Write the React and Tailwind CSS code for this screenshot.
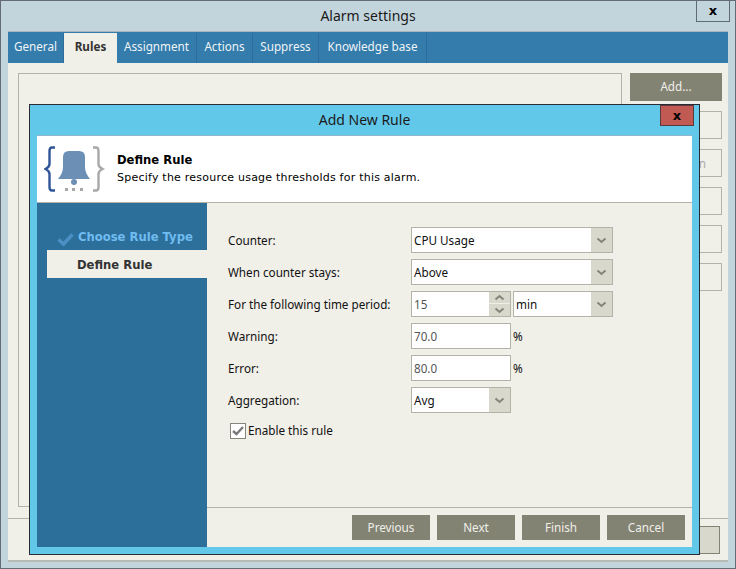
import React from "react";

const tabs = [
  { label: "General", w: "w-[56px]" },
  { label: "Rules", w: "w-[53px]", active: true },
  { label: "Assignment", w: "w-[80px]" },
  { label: "Actions", w: "w-[56px]" },
  { label: "Suppress", w: "w-[66px]" },
  { label: "Knowledge base", w: "w-[108px]" },
];

const ui = "font-['Noto_Sans','Liberation_Sans',sans-serif] text-[11.7px]";
const wide = "font-['DejaVu_Sans',sans-serif]";

function Chevron() {
  return (
    <svg width="11" height="7" viewBox="0 0 11 7">
      <path d="M1.5 1.5 L5.5 5 L9.5 1.5" fill="none" stroke="#85857a" strokeWidth="2" />
    </svg>
  );
}

function Select({ value, w }) {
  return (
    <div className={`${w} h-[26px] flex border border-[#b3b3a8] bg-white`}>
      <span className="flex-1 pl-[2px] leading-[24px] text-[#111]">{value}</span>
      <span className="w-[21px] bg-[#d8d8cc] flex items-center justify-center">
        <Chevron />
      </span>
    </div>
  );
}

function Input({ value }) {
  return (
    <div className="w-[100px] h-[26px] border border-[#b3b3a8] bg-white pl-[2px] leading-[24px] text-[#555]">
      {value}
    </div>
  );
}

function Spinner() {
  return (
    <div className="w-[100px] h-[26px] flex border border-[#b3b3a8] bg-white">
      <span className="flex-1 pl-[2px] leading-[24px] text-[#555]">15</span>
      <span className="w-[21px] flex flex-col bg-[#d8d8cc]">
        <span className="h-[12px] flex items-center justify-center border-b border-[#f0efe8]">
          <svg width="11" height="7" viewBox="0 0 11 7">
            <path d="M1.5 5.5 L5.5 2 L9.5 5.5" fill="none" stroke="#85857a" strokeWidth="2" />
          </svg>
        </span>
        <span className="flex-1 flex items-center justify-center">
          <Chevron />
        </span>
      </span>
    </div>
  );
}

function Row({ label, children }) {
  return (
    <div className="flex items-center h-[26px]">
      <span className="w-[183px] pt-[2px] text-[#111]">{label}</span>
      {children}
    </div>
  );
}

function WizardButton({ label }) {
  return (
    <button className="w-[78px] h-[25px] bg-[#838374] text-[#f0efe8]">{label}</button>
  );
}

function SideButton({ label }) {
  return (
    <div className="h-[28px] border border-[#b3b3a8] text-right pr-[15px] leading-[26px] text-[#aaa]">
      {label}
    </div>
  );
}

function BellIcon() {
  return (
    <svg width="62" height="46" viewBox="0 0 62 46">
      <path
        d="M11 1.5 L8 1.5 Q5.5 1.5 5.5 5 L5.5 18 Q5.5 21 1.5 23 Q5.5 25 5.5 28 L5.5 41 Q5.5 44.5 8 44.5 L11 44.5"
        fill="none"
        stroke="#2f5597"
        strokeWidth="2.4"
      />
      <path
        d="M49 1.5 L52 1.5 Q54.5 1.5 54.5 5 L54.5 18 Q54.5 21 58.5 23 Q54.5 25 54.5 28 L54.5 41 Q54.5 44.5 52 44.5 L49 44.5"
        fill="none"
        stroke="#a8a8a8"
        strokeWidth="2.4"
      />
      <path
        d="M19 11 Q19 5 25 5 L35 5 Q41 5 41 11 L41 21 Q41 27 46 33 L14 33 Q19 27 19 21 Z"
        fill="#6c8fb5"
      />
      <circle cx="30" cy="36" r="3" fill="#6c8fb5" />
      <rect x="21" y="42" width="3" height="3" fill="#a8a8a8" />
      <rect x="28" y="42" width="3" height="3" fill="#a8a8a8" />
      <rect x="36" y="42" width="3" height="3" fill="#a8a8a8" />
    </svg>
  );
}

export default function App() {
  return (
    <div className={`relative w-[736px] h-[569px] overflow-hidden bg-[#c3d5dc] border border-[#636b75] ${ui}`}>
      {/* ALARM SETTINGS WINDOW */}
      <div className="h-[30px] text-center leading-[30px] text-[14px] text-[#1a1a1a]">Alarm settings</div>
      <div className="absolute right-[5px] top-[-1px] w-[34px] h-[22px] border border-[#5e6b75] flex items-center justify-center font-['DejaVu_Sans',sans-serif] text-[13px] font-bold text-black">
        x
      </div>

      <div className="ml-[7px] mr-[7px] h-[531px] flex flex-col border-b-2 border-[#b5bab5] bg-[#f0efe8]">
        <div className="h-[32px] shrink-0 flex items-end bg-[#337cab] pt-[2px] border-t border-[#a9b6bb]">
          {tabs.map((t) => (
            <div
              key={t.label}
              className={`${t.w} h-[30px] text-center leading-[27px] ${
                t.active
                  ? "bg-[#f0efe8] font-bold text-[#333]"
                  : "text-[#f0f4f8] border-r border-[#2c6d99]"
              }`}
            >
              {t.label}
            </div>
          ))}
        </div>

        <div className="h-[456px] shrink-0 flex gap-[8px] pt-[10px] pl-[10px] border-b border-[#b3b3a8]">
          <div className="w-[604px] h-[434px] border border-[#b3b3a8]" />
          <div className="w-[92px] flex flex-col gap-[10px]">
            <div className="h-[28px] bg-[#838374] text-[#f0efe8] text-center leading-[27px]">Add...</div>
            <SideButton label="" />
            <SideButton label="n" />
            <SideButton label="" />
            <SideButton label="" />
            <SideButton label="" />
          </div>
        </div>

        <div className="flex justify-end pt-[7px] pr-[8px]">
          <div className="w-[60px] h-[28px] border border-[#838374] bg-[#d8d8cc]" />
        </div>
      </div>

      {/* ADD NEW RULE DIALOG */}
      <div className="absolute left-[28px] top-[103px] w-[671px] h-[451px] border border-[#2b2b33] bg-[#62c8ea] flex flex-col px-[7px] pb-[7px]">
        <div className="h-[30px] shrink-0 text-center leading-[30px] text-[14px] text-[#1a1a1a]">Add New Rule</div>
        <div className="absolute right-[5px] top-0 w-[34px] h-[21px] bg-[#c05a52] border border-[#5a3a3a] flex items-center justify-center font-['DejaVu_Sans',sans-serif] text-[13px] font-bold text-black">
          x
        </div>

        <div className="h-[68px] shrink-0 flex items-center bg-white border-t border-[#8fb8cc] border-b border-b-[#b3b3a8]">
          <div className="w-[80px] pl-[7px] flex">
            <BellIcon />
          </div>
          <div className={`${wide} text-black`}>
            <div className="font-bold text-[11.6px] leading-[18px]">Define Rule</div>
            <div className="text-[11px] tracking-[0.23px] leading-[18px]">
              Specify the resource usage thresholds for this alarm.
            </div>
          </div>
        </div>

        <div className="flex-1 flex min-h-0">
          <div className={`w-[170px] shrink-0 bg-[#2d6f9b] pt-[21px] pl-[10px] ${wide} font-bold text-[11.6px]`}>
            <div className="h-[26px] pt-[2px] flex items-center relative pl-[31px] text-[#6fbcf0]">
              <svg className="absolute left-[10px] top-[8px]" width="17" height="15" viewBox="0 0 17 15">
                <path d="M1.5 7.5 L6.5 12 L15.5 2.5" fill="none" stroke="#4a90c4" strokeWidth="3.5" />
              </svg>
              Choose Rule Type
            </div>
            <div className="h-[28px] pl-[30px] leading-[30px] bg-[#f0efe8] text-[#333]">Define Rule</div>
          </div>

          <div className="flex-1 flex flex-col bg-[#f0efe8]">
            <div className="h-[305px] shrink-0 pt-[24px] pl-[21px] flex flex-col gap-[6px] border-b border-[#b3b3a8]">
              <Row label="Counter:">
                <Select value="CPU Usage" w="w-[202px]" />
              </Row>
              <Row label="When counter stays:">
                <Select value="Above" w="w-[202px]" />
              </Row>
              <Row label="For the following time period:">
                <div className="flex gap-[2px]">
                  <Spinner />
                  <Select value="min" w="w-[100px]" />
                </div>
              </Row>
              <Row label="Warning:">
                <Input value="70.0" />
                <span className="ml-[2px] pt-[2px] text-[#111]">%</span>
              </Row>
              <Row label="Error:">
                <Input value="80.0" />
                <span className="ml-[2px] pt-[2px] text-[#111]">%</span>
              </Row>
              <Row label="Aggregation:">
                <Select value="Avg" w="w-[100px]" />
              </Row>
              <div className="flex items-center gap-[2px] pl-[2px] mt-[3px] text-[#111]">
                <span className="w-[16px] h-[16px] border border-[#85857a] bg-white flex items-center justify-center">
                  <svg width="12" height="10" viewBox="0 0 12 10">
                    <path d="M1 5 L4.5 8 L11 1" fill="none" stroke="#7a7a7a" strokeWidth="2.4" />
                  </svg>
                </span>
                Enable this rule
              </div>
            </div>
            <div className="flex-1 flex justify-end gap-[7px] pt-[7px] pr-[7px]">
              <WizardButton label="Previous" />
              <WizardButton label="Next" />
              <WizardButton label="Finish" />
              <WizardButton label="Cancel" />
            </div>
          </div>
        </div>
      </div>
    </div>
  );
}
